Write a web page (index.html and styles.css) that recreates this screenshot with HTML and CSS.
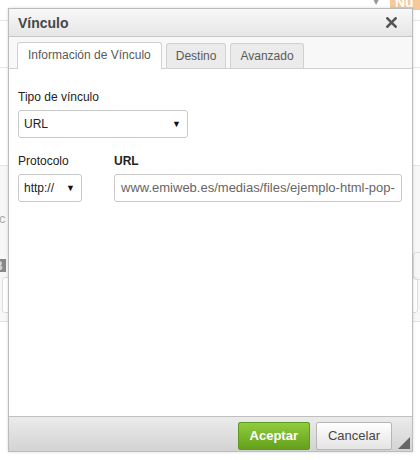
FILE: index.html
```html
<!DOCTYPE html>
<html lang="es">
<head>
<meta charset="UTF-8" />
<meta name="viewport" content="width=device-width, initial-scale=1" />
<title>Vínculo</title>
<link rel="stylesheet" href="styles.css">
</head>
<body>
<div class="page">
  <div class="bg-line l1"></div>
  <div class="bg-line l2"></div>
  <div class="bg-band"></div>
  <div class="bg-text">ic</div>
  <div class="bg-b">B</div>
  <div class="bg-input"></div>
  <div class="bg-arrow">▾</div>
  <div class="bg-new">Nu</div>
  <div class="bg-rbox"></div>
</div>

<div class="dialog">
  <div class="dialog-title">
    <span>Vínculo</span>
    <svg class="close" width="11" height="11" viewBox="0 0 12 12">
      <path d="M1.5 1.5 L10.5 10.5 M10.5 1.5 L1.5 10.5" stroke="#555" stroke-width="2.8" stroke-linecap="square"/>
    </svg>
  </div>
  <div class="tabs">
    <div class="tab active">Información de Vínculo</div>
    <div class="tab">Destino</div>
    <div class="tab">Avanzado</div>
  </div>
  <div class="dialog-body">
    <div class="field">
      <label>Tipo de vínculo</label>
      <div class="select wide"><span>URL</span><span class="arrow">▼</span></div>
    </div>
    <div class="row">
      <div class="field">
        <label>Protocolo</label>
        <div class="select narrow"><span>http://</span><span class="arrow">▼</span></div>
      </div>
      <div class="field grow">
        <label class="strong">URL</label>
        <div class="input">www.emiweb.es/medias/files/ejemplo-html-pop-</div>
      </div>
    </div>
  </div>
  <div class="dialog-footer">
    <button class="btn ok">Aceptar</button>
    <button class="btn cancel">Cancelar</button>
    <span class="grip"></span>
  </div>
</div>
</body>
</html>
```

FILE: styles.css
```css
body {
  margin: 0;
  width: 420px;
  height: 460px;
  overflow: hidden;
  background: #fff;
  font-family: "Liberation Sans", Arial, sans-serif;
  font-size: 12px;
  color: #333;
}
.page {
  position: relative;
  height: 460px;
}
.bg-line {
  position: absolute;
  left: 0;
  right: 0;
  height: 1px;
  background: #e6e6e6;
}
.l1 { top: 20px; }
.l2 { top: 67px; }
.bg-band {
  position: absolute;
  left: 0;
  right: 0;
  top: 165px;
  height: 155px;
  background: #f7f7f7;
  border-top: 1px solid #e4e4e4;
  border-bottom: 1px solid #e4e4e4;
}
.bg-text {
  position: absolute;
  left: -4px;
  top: 211px;
  color: #aaa;
  font-size: 13px;
}
.bg-b {
  position: absolute;
  left: -6px;
  top: 259px;
  width: 12px;
  height: 13px;
  background: #888;
  color: #ddd;
  font-weight: bold;
}
.bg-input {
  position: absolute;
  left: 2px;
  right: 2px;
  top: 277px;
  height: 34px;
  border: 1px solid #ddd;
  border-radius: 3px;
  background: #fff;
}
.bg-arrow {
  position: absolute;
  left: 373px;
  top: -6px;
  color: #999;
}
.bg-new {
  position: absolute;
  left: 390px;
  top: -6px;
  width: 30px;
  height: 16px;
  padding-left: 5px;
  background: #f7c99a;
  color: #fff;
  font-weight: bold;
  font-size: 14px;
}
.bg-rbox {
  position: absolute;
  right: -5px;
  top: 252px;
  width: 10px;
  height: 26px;
  border: 1px solid #ddd;
  border-radius: 3px;
}

.dialog {
  position: absolute;
  left: 8px;
  top: 8px;
  width: 403px;
  height: 442px;
  border: 1px solid #bcbcbc;
  box-shadow: 0 0 3px rgba(0, 0, 0, 0.15);
  background: #fff;
  display: flex;
  flex-direction: column;
}
.dialog-title {
  height: 27px;
  padding: 0 15px 0 9px;
  display: flex;
  align-items: center;
  justify-content: space-between;
  background: linear-gradient(#f8f8f8, #e6e6e6);
  border-bottom: 1px solid #c6c6c6;
  font-size: 14px;
  font-weight: bold;
  color: #474747;
}
.tabs {
  display: flex;
  gap: 4px;
  padding: 5px 0 0 8px;
  height: 26px;
  background: #f8f8f8;
  border-bottom: 1px solid #d1d1d1;
}
.tab {
  padding: 0 9px;
  line-height: 24px;
  border: 1px solid #d1d1d1;
  border-bottom: none;
  border-radius: 3px 3px 0 0;
  background: #ebebeb;
  color: #595959;
  margin-top: 1px;
}
.tab.active {
  background: #fff;
  height: 26px;
  margin-top: 0;
  padding: 0 10px;
}
.dialog-body {
  flex: 1;
  padding: 21px 9px 0 9px;
}
.field label {
  display: block;
  color: #222;
  margin-bottom: 6px;
}
.field label.strong {
  font-weight: bold;
}
.select {
  height: 26px;
  border: 1px solid #c9c9c9;
  border-radius: 3px;
  display: flex;
  align-items: center;
  justify-content: space-between;
  padding: 0 6px 0 5px;
  color: #222;
  background: #fff;
}
.select .arrow {
  font-size: 9px;
  color: #111;
}
.select.wide {
  width: 157px;
}
.select.narrow {
  width: 51px;
}
.row {
  display: flex;
  gap: 32px;
  margin-top: 16px;
}
.grow {
  flex: 1;
}
.input {
  height: 26px;
  line-height: 26px;
  border: 1px solid #c9c9c9;
  border-radius: 3px;
  padding: 0 6px;
  color: #666;
  font-size: 13px;
  white-space: nowrap;
  overflow: hidden;
  margin-right: 1px;
}
.dialog-footer {
  height: 34px;
  border-top: 1px solid #bfbfbf;
  background: linear-gradient(#ebebeb, #d3d3d3);
  display: flex;
  align-items: center;
  justify-content: flex-end;
  gap: 6px;
  padding-right: 20px;
  position: relative;
}
.btn {
  height: 28px;
  padding: 0 11px;
  border-radius: 2px;
  font-family: inherit;
  font-size: 13px;
  margin-top: 3px;
}
.btn.ok {
  background: linear-gradient(#90cc3c, #65a01c);
  border: 1px solid #5b9a1c;
  color: #fff;
  font-weight: bold;
}
.btn.cancel {
  background: linear-gradient(#fff, #e4e4e4);
  border: 1px solid #b6b6b6;
  color: #474747;
}
.grip {
  position: absolute;
  right: 2px;
  bottom: 2px;
  width: 0;
  height: 0;
  border-left: 12px solid transparent;
  border-bottom: 12px solid #666;
}
```
